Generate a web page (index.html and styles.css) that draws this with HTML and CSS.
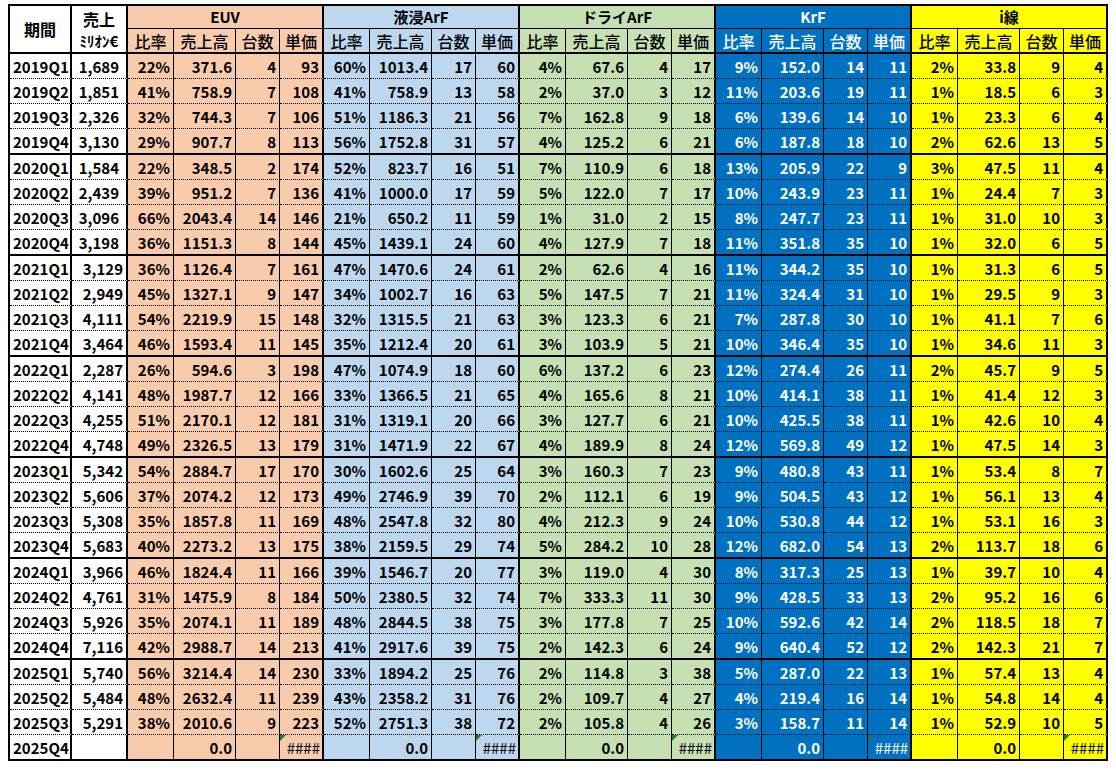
FILE: index.html
```html
<!DOCTYPE html>
<html lang="ja">
<head>
<meta charset="utf-8">
<title>露光装置 売上</title>
<link rel="stylesheet" href="styles.css">
</head>
<body>
<table class="sheet">
<colgroup>
<col class="c-per"><col class="c-sal">
<col class="c-r"><col class="c-s"><col class="c-n"><col class="c-p">
<col class="c-r"><col class="c-s"><col class="c-n"><col class="c-p">
<col class="c-r"><col class="c-s"><col class="c-n"><col class="c-p">
<col class="c-r"><col class="c-s"><col class="c-n"><col class="c-p">
<col class="c-r"><col class="c-s"><col class="c-n"><col class="c-p">
</colgroup>
<thead>
<tr class="h1">
<th class="per" rowspan="2">期間</th>
<th class="sal1">売上</th>
<th class="grp e" colspan="4">EUV</th>
<th class="grp w" colspan="4">液浸ArF</th>
<th class="grp d" colspan="4">ドライArF</th>
<th class="grp k" colspan="4">KrF</th>
<th class="grp i" colspan="4">i線</th>
</tr>
<tr class="h2">
<th class="sal2">ﾐﾘｵﾝ€</th>
<th class="sub e">比率</th><th class="sub e">売上高</th><th class="sub e">台数</th><th class="sub e end">単価</th>
<th class="sub w">比率</th><th class="sub w">売上高</th><th class="sub w">台数</th><th class="sub w end">単価</th>
<th class="sub d">比率</th><th class="sub d">売上高</th><th class="sub d">台数</th><th class="sub d end">単価</th>
<th class="sub k">比率</th><th class="sub k">売上高</th><th class="sub k">台数</th><th class="sub k end">単価</th>
<th class="sub i">比率</th><th class="sub i">売上高</th><th class="sub i">台数</th><th class="sub i end">単価</th>
</tr>
</thead>
<tbody>
<tr><td>2019Q1</td><td class="p7">1,689</td><td>22%</td><td>371.6</td><td>4</td><td>93</td><td>60%</td><td>1013.4</td><td>17</td><td>60</td><td>4%</td><td>67.6</td><td>4</td><td>17</td><td>9%</td><td>152.0</td><td>14</td><td>11</td><td>2%</td><td>33.8</td><td>9</td><td>4</td></tr>
<tr><td>2019Q2</td><td class="p7">1,851</td><td>41%</td><td>758.9</td><td>7</td><td>108</td><td>41%</td><td>758.9</td><td>13</td><td>58</td><td>2%</td><td>37.0</td><td>3</td><td>12</td><td>11%</td><td>203.6</td><td>19</td><td>11</td><td>1%</td><td>18.5</td><td>6</td><td>3</td></tr>
<tr><td>2019Q3</td><td class="p7">2,326</td><td>32%</td><td>744.3</td><td>7</td><td>106</td><td>51%</td><td>1186.3</td><td>21</td><td>56</td><td>7%</td><td>162.8</td><td>9</td><td>18</td><td>6%</td><td>139.6</td><td>14</td><td>10</td><td>1%</td><td>23.3</td><td>6</td><td>4</td></tr>
<tr class="ye"><td>2019Q4</td><td class="p7">3,130</td><td>29%</td><td>907.7</td><td>8</td><td>113</td><td>56%</td><td>1752.8</td><td>31</td><td>57</td><td>4%</td><td>125.2</td><td>6</td><td>21</td><td>6%</td><td>187.8</td><td>18</td><td>10</td><td>2%</td><td>62.6</td><td>13</td><td>5</td></tr>
<tr><td>2020Q1</td><td class="p7">1,584</td><td>22%</td><td>348.5</td><td>2</td><td>174</td><td>52%</td><td>823.7</td><td>16</td><td>51</td><td>7%</td><td>110.9</td><td>6</td><td>18</td><td>13%</td><td>205.9</td><td>22</td><td>9</td><td>3%</td><td>47.5</td><td>11</td><td>4</td></tr>
<tr><td>2020Q2</td><td class="p7">2,439</td><td>39%</td><td>951.2</td><td>7</td><td>136</td><td>41%</td><td>1000.0</td><td>17</td><td>59</td><td>5%</td><td>122.0</td><td>7</td><td>17</td><td>10%</td><td>243.9</td><td>23</td><td>11</td><td>1%</td><td>24.4</td><td>7</td><td>3</td></tr>
<tr><td>2020Q3</td><td class="p7">3,096</td><td>66%</td><td>2043.4</td><td>14</td><td>146</td><td>21%</td><td>650.2</td><td>11</td><td>59</td><td>1%</td><td>31.0</td><td>2</td><td>15</td><td>8%</td><td>247.7</td><td>23</td><td>11</td><td>1%</td><td>31.0</td><td>10</td><td>3</td></tr>
<tr class="ye"><td>2020Q4</td><td class="p7">3,198</td><td>36%</td><td>1151.3</td><td>8</td><td>144</td><td>45%</td><td>1439.1</td><td>24</td><td>60</td><td>4%</td><td>127.9</td><td>7</td><td>18</td><td>11%</td><td>351.8</td><td>35</td><td>10</td><td>1%</td><td>32.0</td><td>6</td><td>5</td></tr>
<tr><td>2021Q1</td><td>3,129</td><td>36%</td><td>1126.4</td><td>7</td><td>161</td><td>47%</td><td>1470.6</td><td>24</td><td>61</td><td>2%</td><td>62.6</td><td>4</td><td>16</td><td>11%</td><td>344.2</td><td>35</td><td>10</td><td>1%</td><td>31.3</td><td>6</td><td>5</td></tr>
<tr><td>2021Q2</td><td>2,949</td><td>45%</td><td>1327.1</td><td>9</td><td>147</td><td>34%</td><td>1002.7</td><td>16</td><td>63</td><td>5%</td><td>147.5</td><td>7</td><td>21</td><td>11%</td><td>324.4</td><td>31</td><td>10</td><td>1%</td><td>29.5</td><td>9</td><td>3</td></tr>
<tr><td>2021Q3</td><td>4,111</td><td>54%</td><td>2219.9</td><td>15</td><td>148</td><td>32%</td><td>1315.5</td><td>21</td><td>63</td><td>3%</td><td>123.3</td><td>6</td><td>21</td><td>7%</td><td>287.8</td><td>30</td><td>10</td><td>1%</td><td>41.1</td><td>7</td><td>6</td></tr>
<tr class="ye"><td>2021Q4</td><td>3,464</td><td>46%</td><td>1593.4</td><td>11</td><td>145</td><td>35%</td><td>1212.4</td><td>20</td><td>61</td><td>3%</td><td>103.9</td><td>5</td><td>21</td><td>10%</td><td>346.4</td><td>35</td><td>10</td><td>1%</td><td>34.6</td><td>11</td><td>3</td></tr>
<tr><td>2022Q1</td><td>2,287</td><td>26%</td><td>594.6</td><td>3</td><td>198</td><td>47%</td><td>1074.9</td><td>18</td><td>60</td><td>6%</td><td>137.2</td><td>6</td><td>23</td><td>12%</td><td>274.4</td><td>26</td><td>11</td><td>2%</td><td>45.7</td><td>9</td><td>5</td></tr>
<tr><td>2022Q2</td><td>4,141</td><td>48%</td><td>1987.7</td><td>12</td><td>166</td><td>33%</td><td>1366.5</td><td>21</td><td>65</td><td>4%</td><td>165.6</td><td>8</td><td>21</td><td>10%</td><td>414.1</td><td>38</td><td>11</td><td>1%</td><td>41.4</td><td>12</td><td>3</td></tr>
<tr><td>2022Q3</td><td>4,255</td><td>51%</td><td>2170.1</td><td>12</td><td>181</td><td>31%</td><td>1319.1</td><td>20</td><td>66</td><td>3%</td><td>127.7</td><td>6</td><td>21</td><td>10%</td><td>425.5</td><td>38</td><td>11</td><td>1%</td><td>42.6</td><td>10</td><td>4</td></tr>
<tr class="ye"><td>2022Q4</td><td>4,748</td><td>49%</td><td>2326.5</td><td>13</td><td>179</td><td>31%</td><td>1471.9</td><td>22</td><td>67</td><td>4%</td><td>189.9</td><td>8</td><td>24</td><td>12%</td><td>569.8</td><td>49</td><td>12</td><td>1%</td><td>47.5</td><td>14</td><td>3</td></tr>
<tr><td>2023Q1</td><td>5,342</td><td>54%</td><td>2884.7</td><td>17</td><td>170</td><td>30%</td><td>1602.6</td><td>25</td><td>64</td><td>3%</td><td>160.3</td><td>7</td><td>23</td><td>9%</td><td>480.8</td><td>43</td><td>11</td><td>1%</td><td>53.4</td><td>8</td><td>7</td></tr>
<tr><td>2023Q2</td><td>5,606</td><td>37%</td><td>2074.2</td><td>12</td><td>173</td><td>49%</td><td>2746.9</td><td>39</td><td>70</td><td>2%</td><td>112.1</td><td>6</td><td>19</td><td>9%</td><td>504.5</td><td>43</td><td>12</td><td>1%</td><td>56.1</td><td>13</td><td>4</td></tr>
<tr><td>2023Q3</td><td>5,308</td><td>35%</td><td>1857.8</td><td>11</td><td>169</td><td>48%</td><td>2547.8</td><td>32</td><td>80</td><td>4%</td><td>212.3</td><td>9</td><td>24</td><td>10%</td><td>530.8</td><td>44</td><td>12</td><td>1%</td><td>53.1</td><td>16</td><td>3</td></tr>
<tr class="ye"><td>2023Q4</td><td>5,683</td><td>40%</td><td>2273.2</td><td>13</td><td>175</td><td>38%</td><td>2159.5</td><td>29</td><td>74</td><td>5%</td><td>284.2</td><td>10</td><td>28</td><td>12%</td><td>682.0</td><td>54</td><td>13</td><td>2%</td><td>113.7</td><td>18</td><td>6</td></tr>
<tr><td>2024Q1</td><td>3,966</td><td>46%</td><td>1824.4</td><td>11</td><td>166</td><td>39%</td><td>1546.7</td><td>20</td><td>77</td><td>3%</td><td>119.0</td><td>4</td><td>30</td><td>8%</td><td>317.3</td><td>25</td><td>13</td><td>1%</td><td>39.7</td><td>10</td><td>4</td></tr>
<tr><td>2024Q2</td><td>4,761</td><td>31%</td><td>1475.9</td><td>8</td><td>184</td><td>50%</td><td>2380.5</td><td>32</td><td>74</td><td>7%</td><td>333.3</td><td>11</td><td>30</td><td>9%</td><td>428.5</td><td>33</td><td>13</td><td>2%</td><td>95.2</td><td>16</td><td>6</td></tr>
<tr><td>2024Q3</td><td>5,926</td><td>35%</td><td>2074.1</td><td>11</td><td>189</td><td>48%</td><td>2844.5</td><td>38</td><td>75</td><td>3%</td><td>177.8</td><td>7</td><td>25</td><td>10%</td><td>592.6</td><td>42</td><td>14</td><td>2%</td><td>118.5</td><td>18</td><td>7</td></tr>
<tr class="ye"><td>2024Q4</td><td>7,116</td><td>42%</td><td>2988.7</td><td>14</td><td>213</td><td>41%</td><td>2917.6</td><td>39</td><td>75</td><td>2%</td><td>142.3</td><td>6</td><td>24</td><td>9%</td><td>640.4</td><td>52</td><td>12</td><td>2%</td><td>142.3</td><td>21</td><td>7</td></tr>
<tr><td>2025Q1</td><td>5,740</td><td>56%</td><td>3214.4</td><td>14</td><td>230</td><td>33%</td><td>1894.2</td><td>25</td><td>76</td><td>2%</td><td>114.8</td><td>3</td><td>38</td><td>5%</td><td>287.0</td><td>22</td><td>13</td><td>1%</td><td>57.4</td><td>13</td><td>4</td></tr>
<tr><td>2025Q2</td><td>5,484</td><td>48%</td><td>2632.4</td><td>11</td><td>239</td><td>43%</td><td>2358.2</td><td>31</td><td>76</td><td>2%</td><td>109.7</td><td>4</td><td>27</td><td>4%</td><td>219.4</td><td>16</td><td>14</td><td>1%</td><td>54.8</td><td>14</td><td>4</td></tr>
<tr><td>2025Q3</td><td>5,291</td><td>38%</td><td>2010.6</td><td>9</td><td>223</td><td>52%</td><td>2751.3</td><td>38</td><td>72</td><td>2%</td><td>105.8</td><td>4</td><td>26</td><td>3%</td><td>158.7</td><td>11</td><td>14</td><td>1%</td><td>52.9</td><td>10</td><td>5</td></tr>
<tr class="ye"><td>2025Q4</td><td></td><td></td><td>0.0</td><td></td><td class="err">####</td><td></td><td>0.0</td><td></td><td class="err">####</td><td></td><td>0.0</td><td></td><td class="err">####</td><td></td><td>0.0</td><td></td><td class="err">####</td><td></td><td>0.0</td><td></td><td class="err">####</td></tr>
</tbody>
</table>
</body>
</html>
```
FILE: styles.css
```css
html, body {
  margin: 0;
  padding: 0;
  background: #ffffff;
}
body {
  padding: 4px 0 0 8px;
  font-family: "Noto Sans CJK JP", "Noto Sans", sans-serif;
  color: #000;
}
.sheet {
  border-collapse: separate;
  border-spacing: 0;
  table-layout: fixed;
  width: 1100px;
  border-top: 2px solid #000;
  border-left: 2px solid #000;
  font-size: 15px;
}
.c-per { width: 62px; }
.c-sal { width: 56px; }
.c-r { width: 46px; }
.c-s { width: 62px; }
.c-n { width: 44px; }
.c-p { width: 44px; }

.sheet th,
.sheet td {
  box-sizing: border-box;
  padding: 1px 3px 0 3px;
  line-height: 18px;
  white-space: nowrap;
  vertical-align: middle;
}
.sheet td { overflow: hidden; }

/* header */
.h1 { height: 23px; }
.h2 { height: 25px; }
.sheet th {
  border-right: 1px solid #000;
  text-align: center;
  padding: 0;
}
.per {
  font-weight: 700;
  border-bottom: 2px solid #000;
  border-right-width: 2px !important;
  background: #fff;
  font-size: 16px;
}
.sal1 {
  font-weight: 700;
  font-size: 16px;
  background: #fff;
  border-right-width: 2px !important;
  padding-top: 2px !important;
}
.sal2 {
  font-weight: 700;
  font-size: 15px;
  background: #fff;
  border-right-width: 2px !important;
  border-bottom: 2px solid #000;
}
.grp {
  font-weight: 700;
  border-bottom: 1px solid #000;
  border-right-width: 2px !important;
}
.sub {
  font-weight: 500;
  font-size: 16px;
  border-bottom: 2px solid #000;
}
.sub.end { border-right-width: 2px; }

.e { background: #f8cbad; }
.w { background: #bdd7ee; }
.d { background: #c6e0b4; }
.k { background: #0070c0; color: #fff; }
.i { background: #ffff00; }

/* body */
.sheet tbody tr { height: 25px; }
.sheet tbody tr.ye { height: 26px; }
.sheet td {
  border-right: 1px solid #000;
  border-bottom: 1px dotted #000;
  text-align: right;
  font-weight: 700;
  position: relative;
}
.sheet tr.ye td { border-bottom: 2px solid #000; }
.sheet td:first-child {
  text-align: left;
  padding-left: 3px;
  border-right-width: 2px;
  background: #fff;
}
.sheet td:nth-child(2) { background: #fff; padding-right: 3px; }
.sheet td.p7 { padding-right: 7px; }
.sheet td:nth-child(4n+2) { border-right-width: 2px; }

.sheet td:nth-child(n+3):nth-child(-n+6) { background: #f8cbad; }
.sheet td:nth-child(n+7):nth-child(-n+10) { background: #bdd7ee; }
.sheet td:nth-child(n+11):nth-child(-n+14) { background: #c6e0b4; }
.sheet td:nth-child(n+15):nth-child(-n+18) { background: #0070c0; color: #fff; }
.sheet td:nth-child(n+19):nth-child(-n+22) { background: #ffff00; }

.sheet td.err {
  font-weight: 400;
  font-size: 15px;
  padding-right: 2px;
}
.sheet td.err::before {
  content: "";
  position: absolute;
  left: 0;
  top: 0;
  border-top: 6px solid #1d7d32;
  border-right: 6px solid transparent;
}
```
